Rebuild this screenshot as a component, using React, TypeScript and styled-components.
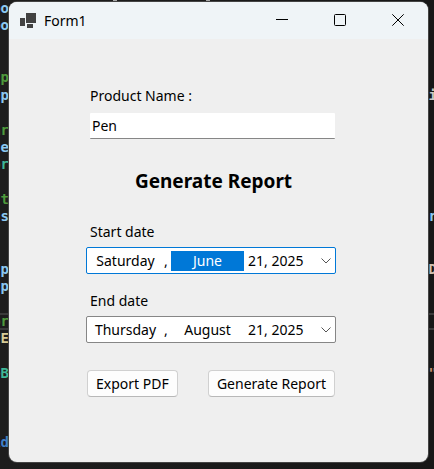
import React, { useState } from "react";
import styled, { createGlobalStyle } from "styled-components";

const GlobalStyle = createGlobalStyle`
  *, *::before, *::after { box-sizing: border-box; }
  body { margin: 0; background: #1b1b1b; }
  button, input, select { font: inherit; color: inherit; }
`;

const Desktop = styled.div`
  display: grid;
  grid-template: minmax(100vh, auto) / minmax(0, 1fr);
  overflow: hidden;
  background: linear-gradient(90deg, #1d1d1d, #171717);
`;

const Editor = styled.div`
  grid-area: 1 / 1;
  display: grid;
  grid-template-rows: repeat(27, minmax(0, 1fr));
  font: bold 14px/17px "DejaVu Sans Mono", monospace;
`;

const CodeLine = styled.div<{ $row: number; $current?: boolean }>`
  grid-row: ${(p) => p.$row};
  display: flex;
  justify-content: space-between;
  min-height: 0;
  white-space: pre;
  box-shadow: ${(p) => (p.$current ? "inset 0 2px #3a3a3a, inset 0 -2px #3a3a3a" : "none")};
`;

const CodeEdge = styled.span<{ $color: string; $end?: boolean }>`
  display: flex;
  justify-content: flex-end;
  width: 9px;
  margin-right: ${(p) => (p.$end ? "-3px" : "0")};
  overflow: hidden;
  color: ${(p) => p.$color};
`;

const TopEdge = styled.svg`
  grid-area: 1 / 1;
  width: 434px;
  height: 2px;
`;

const Window = styled.main`
  grid-area: 1 / 1;
  display: flex;
  flex-direction: column;
  margin: 2px 6px 7px 9px;
  overflow: hidden;
  border-radius: 8px;
  box-shadow: 0 0 0 1px #444;
  background: #efefef;
  color: #000;
  font: 14px/20px "Noto Sans", sans-serif;
`;

const TitleBar = styled.header`
  display: flex;
  align-items: center;
  height: 37px;
  padding: 0 1px 0 11px;
  background: #eff4f7;
`;

const Title = styled.h1`
  flex: 1;
  margin: 0 0 0 8px;
  font: inherit;
`;

const CaptionButton = styled.button`
  display: grid;
  place-items: center;
  align-self: flex-start;
  width: 58px;
  height: 36px;
  padding: 0;
  border: 0;
  background: none;
`;

const Form = styled.form`
  display: flex;
  flex-direction: column;
  padding: 47px 92px 0 77px;
`;

const Label = styled.label`
  padding-left: 4px;
`;

const TextInput = styled.input`
  height: 26px;
  margin: 7px 1px 0 4px;
  padding: 0 2px;
  border: 0;
  border-bottom: 1px solid #868686;
  border-radius: 1px;
  outline: 0;
  background: #fff;
`;

const Heading = styled.h2`
  margin: 29px 0 28px 5px;
  text-align: center;
  font: bold 19px/26px "Noto Sans", sans-serif;
`;

const DateField = styled.div<{ $active?: boolean }>`
  display: grid;
  grid-template-columns: 77px 7px 73px minmax(0, 1fr) 24px;
  align-items: center;
  height: 27px;
  margin: 5px 0 17px;
  border: 1px solid ${(p) => (p.$active ? "#0078d7" : "#868686")};
  border-radius: 2px;
  background: #fff;
`;

const DatePart = styled.span<{ $selected?: boolean }>`
  text-align: center;
  background: ${(p) => (p.$selected ? "#0078d7" : "transparent")};
  color: ${(p) => (p.$selected ? "#fff" : "inherit")};
  white-space: nowrap;
`;

const Comma = styled.span`
  text-align: left;
`;

const DayYear = styled.span`
  padding-left: 4px;
  white-space: nowrap;
`;

const DropButton = styled.button`
  display: grid;
  place-items: center;
  height: 25px;
  padding: 0 0 0 5px;
  border: 0;
  background: none;
`;

const Actions = styled.div`
  display: flex;
  justify-content: space-between;
  margin: 10px 1px 0;
`;

const PushButton = styled.button`
  height: 27px;
  padding: 0 8px;
  border: 1px solid #d0d0d0;
  border-bottom-color: #b8b8b8;
  border-radius: 4px;
  background: #fdfdfd;
  white-space: nowrap;
`;

const AppIcon = () => (
  <svg width="16" height="16" viewBox="0 0 16 16" fill="#424242" aria-hidden="true">
    <path d="M6 0h10v10H6zM0 5h5v8H0zM7 11h6v4H7z" />
  </svg>
);

const Chevron = () => (
  <svg width="10" height="6" viewBox="0 0 10 6" fill="none" stroke="#555" aria-hidden="true">
    <path d="M.5.5 5 5 9.500.5" />
  </svg>
);

const codeLines = [
  { row: 1, left: "oo", color: "#8cc8f0" },
  { row: 2, left: "oo", color: "#8cc8f0" },
  { row: 5, left: "p", color: "#4e9a3c" },
  { row: 6, left: "p", color: "#8cc8f0", right: "i", rightColor: "#c8c8c8" },
  { row: 8, left: "ar", color: "#4e9a3c" },
  { row: 9, left: "e", color: "#8cc8f0" },
  { row: 10, left: "or", color: "#3fb898" },
  { row: 12, left: "st", color: "#4e9a3c" },
  { row: 13, left: "s", color: "#8cc8f0", right: "r", rightColor: "#8cc8f0" },
  { row: 16, left: "p", color: "#8cc8f0", right: "D", rightColor: "#d0c0b0" },
  { row: 17, left: "p", color: "#8cc8f0" },
  { row: 19, left: "or", color: "#4e9a3c", current: true },
  { row: 20, left: "E", color: "#d8cc98" },
  { row: 22, left: "eB", color: "#3fb898", right: "\"", rightColor: "#c89070" },
  { row: 26, left: "id", color: "#4080c8" },
];

type DatePickerProps = {
  id: string;
  label: string;
  parts: [string, string, string];
  active?: boolean;
};

function DatePicker({ id, label, parts, active }: DatePickerProps) {
  return (
    <>
      <Label as="span" id={id}>{label}</Label>
      <DateField role="group" aria-labelledby={id} $active={active}>
        <DatePart>{parts[0]}</DatePart>
        <Comma>,</Comma>
        <DatePart $selected={active}>{parts[1]}</DatePart>
        <DayYear>{parts[2]}</DayYear>
        <DropButton type="button" aria-label={`Choose ${label.toLowerCase()}`}>
          <Chevron />
        </DropButton>
      </DateField>
    </>
  );
}

export default function App() {
  const [product, setProduct] = useState("Pen");
  return (
    <Desktop>
      <GlobalStyle />
      <Editor aria-hidden="true">
        {codeLines.map((line) => (
          <CodeLine key={line.row} $row={line.row} $current={line.current}>
            <CodeEdge $color={line.color}>{line.left}</CodeEdge>
            {line.right && (
              <CodeEdge $color={line.rightColor} $end>{line.right}</CodeEdge>
            )}
          </CodeLine>
        ))}
      </Editor>
      <TopEdge viewBox="0 0 434 2" aria-hidden="true">
        <path d="M113 0h4v2h-4zM206 0h4v2h-4zM231 1h2v1h-2zM247 1h2v1h-2zM252 1h2v1h-2zM260 1h3v1h-3z" fill="#a8a8a8" />
        <path d="M302 1h4v1h-4zM315 1h4v1h-4z" fill="#6c92b4" />
      </TopEdge>
      <Window>
        <TitleBar>
          <AppIcon />
          <Title>Form1</Title>
          <CaptionButton type="button" aria-label="Minimize">
            <svg width="12" height="12" viewBox="0 0 12 12" stroke="#000" fill="none"><path d="M0 5.500h12" /></svg>
          </CaptionButton>
          <CaptionButton type="button" aria-label="Maximize">
            <svg width="12" height="12" viewBox="0 0 12 12" stroke="#000" fill="none"><rect x=".5" y=".5" width="11" height="11" rx="1" /></svg>
          </CaptionButton>
          <CaptionButton type="button" aria-label="Close">
            <svg width="12" height="12" viewBox="0 0 12 12" stroke="#000" fill="none"><path d="m.3.3 11.400 11.400M11.700.3.3 11.700" /></svg>
          </CaptionButton>
        </TitleBar>
        <Form onSubmit={(e) => e.preventDefault()}>
          <Label htmlFor="product">Product Name :</Label>
          <TextInput id="product" value={product} onChange={(e) => setProduct(e.target.value)} />
          <Heading>Generate Report</Heading>
          <DatePicker id="start" label="Start date" parts={["Saturday", "June", "21, 2025"]} active />
          <DatePicker id="end" label="End date" parts={["Thursday", "August", "21, 2025"]} />
          <Actions>
            <PushButton type="button">Export PDF</PushButton>
            <PushButton type="submit">Generate Report</PushButton>
          </Actions>
        </Form>
      </Window>
    </Desktop>
  );
}
